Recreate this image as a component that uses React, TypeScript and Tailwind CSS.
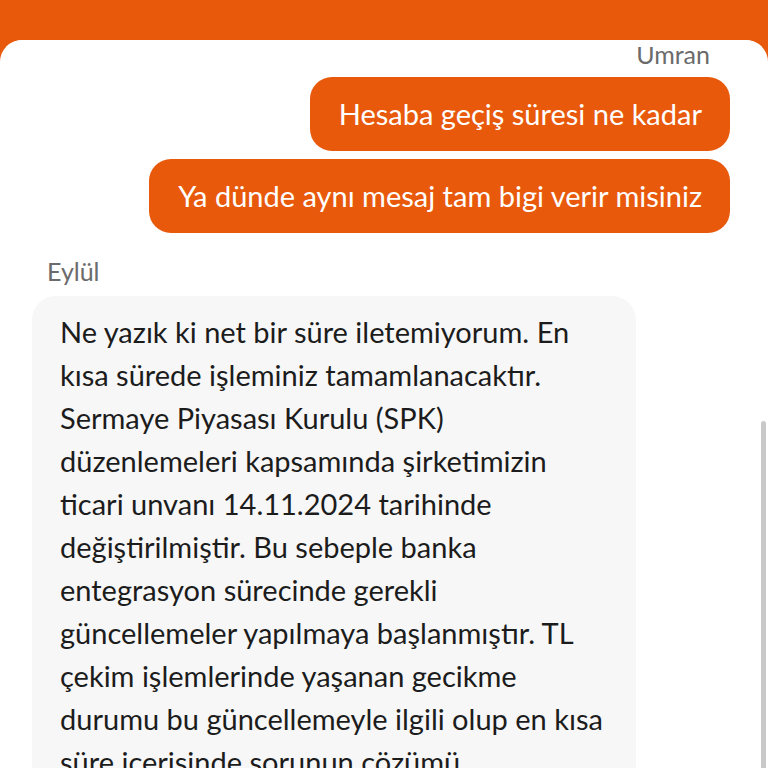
import React from 'react';

const messages = [
  'Hesaba geçiş süresi ne kadar',
  'Ya dünde aynı mesaj tam bigi verir misiniz',
];

const reply =
  'Ne yazık ki net bir süre iletemiyorum. En kısa sürede işleminiz tamamlanacaktır. Sermaye Piyasası Kurulu (SPK) düzenlemeleri kapsamında şirketimizin ticari unvanı 14.11.2024 tarihinde değiştirilmiştir. Bu sebeple banka entegrasyon sürecinde gerekli güncellemeler yapılmaya başlanmıştır. TL çekim işlemlerinde yaşanan gecikme durumu bu güncellemeyle ilgili olup en kısa süre içerisinde sorunun çözümü sağlanacaktır.';

export default function App() {
  return (
    <div className="h-screen bg-[#e8590c] pt-[40px] overflow-hidden" style={{ fontFamily: 'Lato, "Noto Sans", sans-serif' }}>
      <div className="relative h-full bg-white rounded-t-[22px] overflow-hidden">
        {/* top edge covers the scrolled-off part */}
        <div className="absolute top-0 inset-x-0 h-[7px] bg-white z-10" />
        {/* scrollbar thumb */}
        <div className="absolute right-[2px] top-[381px] w-[5px] h-[400px] rounded-full bg-[#c9c9c9] z-10" />

        <div className="flex flex-col -mt-[1px]">
          <div className="flex justify-end pr-[58px]">
            <span className="text-[25px] leading-[30px] text-[#6b6b6b]">Ümran</span>
          </div>
          <div className="flex flex-col items-end gap-[8px] pr-[38px] mt-[8px]">
            {messages.map((m, i) => (
              <div
                key={i}
                className="bg-[#e8590c] text-white text-[29px] leading-[36px] rounded-[22px] pl-[29px] pr-[28px] py-[19px]"
              >
                {m}
              </div>
            ))}
          </div>

          <div className="pl-[47px] mt-[23px]">
            <span className="text-[25px] leading-[30px] text-[#6b6b6b]">Eylül</span>
          </div>
          <div className="pl-[32px] mt-[9px]">
            <div className="w-[604px] bg-[#f7f7f7] rounded-[24px] pl-[28px] pr-[24px] pt-[14px] pb-[20px] text-[29px] leading-[43px] text-[#1c1c1c]">
              {reply}
            </div>
          </div>
        </div>
      </div>
    </div>
  );
}
